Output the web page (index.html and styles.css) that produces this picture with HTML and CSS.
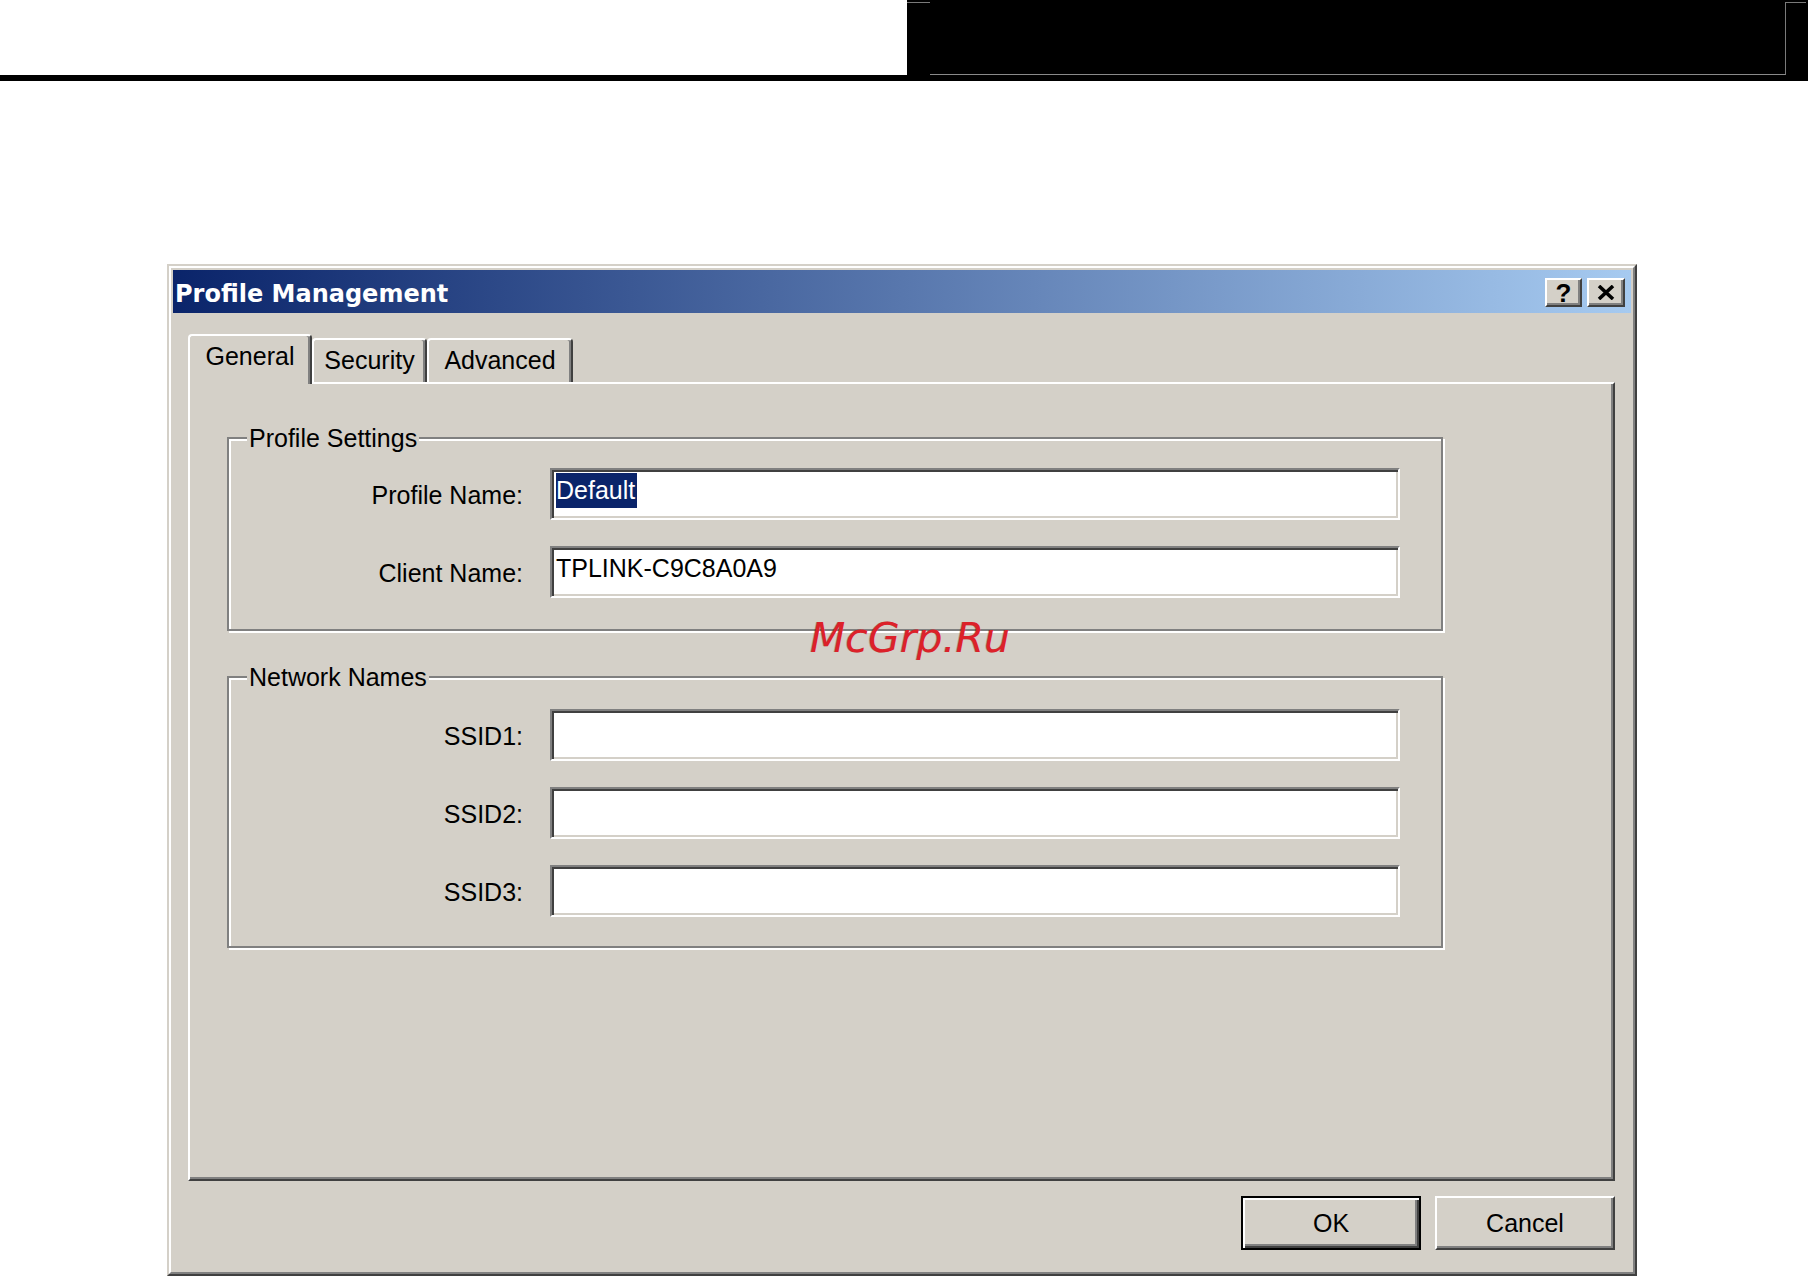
FILE: index.html
```html
<!DOCTYPE html>
<html lang="en">

<head>
    <meta charset="UTF-8">
    <title>Profile Management</title>
    <link rel="stylesheet" href="styles.css">
</head>

<body>

    <div class="topbar">
        <div class="topbar-box">
            <div class="topbar-frame"></div>
        </div>
    </div>
    <div class="rule"></div>

    <div class="window">
        <div class="window-frame">
            <div class="titlebar">
                <span class="title">Profile Management</span>
                <div class="caption-buttons">
                    <button class="caption-btn help">?</button>
                    <button class="caption-btn close">
                        <svg width="18" height="15" viewBox="0 0 18 15">
                            <path d="M2 1 L16 14 M16 1 L2 14" stroke="#000" stroke-width="3.6" fill="none" />
                        </svg>
                    </button>
                </div>
            </div>

            <div class="dialog-body">
                <div class="tabs">
                    <div class="tab active tab-general">General</div>
                    <div class="tab tab-security">Security</div>
                    <div class="tab tab-advanced">Advanced</div>
                </div>

                <div class="panel">
                    <div class="group group-profile">
                        <div class="group-title">Profile Settings</div>
                        <div class="row">
                            <label>Profile Name:</label>
                            <div class="field"><span class="selected">Default</span></div>
                        </div>
                        <div class="row">
                            <label>Client Name:</label>
                            <div class="field"><span class="value">TPLINK-C9C8A0A9</span></div>
                        </div>
                    </div>

                    <div class="group group-network">
                        <div class="group-title">Network Names</div>
                        <div class="row">
                            <label>SSID1:</label>
                            <div class="field"></div>
                        </div>
                        <div class="row">
                            <label>SSID2:</label>
                            <div class="field"></div>
                        </div>
                        <div class="row">
                            <label>SSID3:</label>
                            <div class="field"></div>
                        </div>
                    </div>
                </div>

                <div class="actions">
                    <button class="btn default">OK</button>
                    <button class="btn">Cancel</button>
                </div>
            </div>
        </div>

        <!-- watermark over the dialog -->
        <div class="watermark">McGrp.Ru</div>
    </div>

</body>

</html>
```

FILE: styles.css
```css
* {
    margin: 0;
    padding: 0;
    box-sizing: border-box;
}

html,
body {
    height: 1276px;
    overflow: hidden;
}

body {
    background-color: #ffffff;
    font-family: 'Liberation Sans', Arial, sans-serif;
    font-size: 25px;
    color: #000000;
}

/* page header */
.topbar {
    display: flex;
    height: 75px;
}

.topbar-box {
    position: relative;
    margin-left: 907px;
    flex: 1;
    background-color: #000000;
    padding: 2px 22px 0 23px;
}

.topbar-box::before,
.topbar-box::after {
    content: '';
    position: absolute;
    top: 2px;
    height: 1px;
    background-color: #7a7a7a;
}

.topbar-box::before {
    left: 0;
    width: 23px;
}

.topbar-box::after {
    right: 2px;
    width: 21px;
}

.topbar-frame {
    height: 73px;
    border-right: 1px solid #7a7a7a;
    border-bottom: 1px solid #8a8a8a;
}

.rule {
    height: 6px;
    background-color: #000000;
}

/* dialog window */
.window {
    position: relative;
    width: 1470px;
    height: 1012px;
    margin: 183px 0 0 167px;
    border: 2px solid;
    border-color: #d4d0c8 #404040 #404040 #d4d0c8;
}

.window-frame {
    height: 100%;
    border: 2px solid;
    border-color: #ffffff #808080 #808080 #ffffff;
    padding: 2px;
    background-color: #d4d0c8;
}

.titlebar {
    display: flex;
    align-items: center;
    justify-content: space-between;
    height: 43px;
    background: linear-gradient(to right, #0a246a, #a6caf0);
}

.title {
    height: 43px;
    padding: 5px 0 0 2px;
    line-height: 38px;
    font-family: 'DejaVu Sans', Verdana, sans-serif;
    font-weight: bold;
    font-size: 24px;
    color: #ffffff;
}

.caption-buttons {
    display: flex;
    gap: 5px;
    margin-right: 6px;
    padding-top: 2px;
}

.caption-btn {
    display: flex;
    align-items: center;
    justify-content: center;
    width: 37px;
    height: 29px;
    background-color: #d4d0c8;
    border: 2px solid;
    border-color: #ffffff #404040 #404040 #ffffff;
    box-shadow: inset -2px -2px #808080;
    font-family: 'Liberation Sans', Arial, sans-serif;
    font-weight: bold;
    font-size: 26px;
    line-height: 1;
    color: #000000;
}

.caption-btn.close {
    width: 38px;
}

.dialog-body {
    padding: 21px 16px 0 15px;
}

/* tabs */
.tabs {
    display: flex;
    align-items: flex-end;
    height: 48px;
}

.tab {
    height: 44px;
    padding-top: 6px;
    line-height: 28px;
    text-align: center;
    background-color: #d4d0c8;
    border: 2px solid;
    border-bottom: none;
    border-color: #ffffff #404040 transparent #ffffff;
    border-radius: 4px 4px 0 0;
    box-shadow: inset -2px 0 #808080;
}

.tab.active {
    position: relative;
    z-index: 1;
    height: 50px;
    margin-bottom: -2px;
}

.tab-general {
    width: 124px;
}

.tab-security {
    width: 115px;
}

.tab-advanced {
    width: 146px;
}

.panel {
    height: 799px;
    padding: 53px 0 0 37px;
    border: 2px solid;
    border-color: #ffffff #404040 #404040 #ffffff;
    box-shadow: inset -2px -2px #808080;
}

/* group boxes */
.group {
    display: flex;
    flex-direction: column;
    gap: 26px;
    width: 1216px;
    padding: 0 0 31px;
    border: 2px solid #808080;
    box-shadow: inset 2px 2px #ffffff, 2px 2px #ffffff;
}

.group-network {
    margin-top: 45px;
    padding-bottom: 29px;
}

.group-title {
    align-self: flex-start;
    margin: -15px 0 -10px 18px;
    padding: 0 2px;
    line-height: 28px;
    background-color: #d4d0c8;
}

.group-network .group-title {
    margin-bottom: -8px;
}

.row {
    display: grid;
    grid-template-columns: 294px 850px;
    column-gap: 27px;
    align-items: center;
}

.row label {
    text-align: right;
    padding-top: 3px;
}

.field {
    height: 52px;
    padding: 3px 4px 0;
    background-color: #ffffff;
    border: 2px solid;
    border-color: #808080 #ffffff #ffffff #808080;
    box-shadow: inset 2px 2px #404040, inset -2px -2px #d4d0c8;
    line-height: 35px;
    white-space: nowrap;
}

.selected {
    display: inline-block;
    line-height: 35px;
    padding-right: 2px;
    background-color: #0a246a;
    color: #ffffff;
}

/* dialog buttons */
.actions {
    display: flex;
    justify-content: flex-end;
    gap: 14px;
    padding-top: 15px;
}

.btn {
    width: 180px;
    height: 54px;
    font-family: 'Liberation Sans', Arial, sans-serif;
    font-size: 25px;
    color: #000000;
    background-color: #d4d0c8;
    border: 2px solid;
    border-color: #ffffff #404040 #404040 #ffffff;
    box-shadow: inset -2px -2px #808080;
}

.btn.default {
    border-color: #000000;
    box-shadow: inset 2px 2px #ffffff, inset -2px -2px #404040, inset -4px -4px #808080;
}

.watermark {
    position: absolute;
    left: 641px;
    top: 352px;
    line-height: 41px;
    font-family: 'DejaVu Sans', sans-serif;
    font-style: italic;
    font-size: 41px;
    color: #dc2129;
    text-shadow: -1px 0 rgba(60, 0, 0, 0.25);
}
```
